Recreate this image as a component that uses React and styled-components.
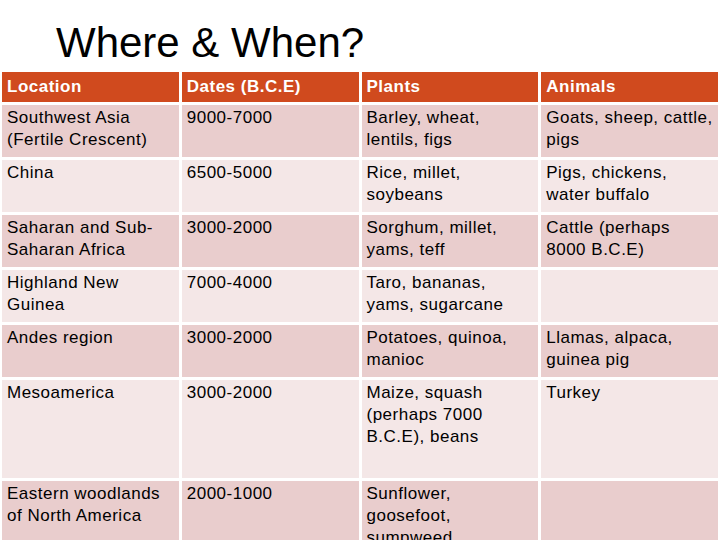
import React from "react";
import styled, { createGlobalStyle } from "styled-components";

const GlobalStyle = createGlobalStyle`
  html, body {
    margin: 0;
    padding: 0;
    background: #ffffff;
    font-family: "Liberation Sans", Arial, sans-serif;
  }
  body {
    width: 720px;
    height: 540px;
    overflow: hidden;
  }
`;

const Slide = styled.div`
  width: 720px;
  height: 540px;
  overflow: hidden;
  display: flex;
  flex-direction: column;
`;

const Title = styled.h1`
  flex-shrink: 0;
  margin: 0;
  height: 72px;
  padding-left: 56px;
  box-sizing: border-box;
  font-size: 42px;
  font-weight: normal;
  line-height: 1;
  padding-top: 22px;
  color: #000000;
  white-space: nowrap;
`;

const Table = styled.div`
  flex-shrink: 0;
  display: grid;
  grid-template-columns: repeat(4, 1fr);
  grid-template-rows: 30px repeat(5, 52px) 98px 80px;
  column-gap: 3px;
  row-gap: 3px;
  padding: 0 2px;
`;

const HeadCell = styled.div`
  background: #d04a1e;
  color: #ffffff;
  font-weight: bold;
  font-size: 17px;
  letter-spacing: 0.5px;
  display: flex;
  align-items: center;
  padding: 0 5px;
`;

const Cell = styled.div`
  background: ${({ $dark }) => ($dark ? "#e9cdcd" : "#f4e7e7")};
  color: #000000;
  font-size: 17px;
  letter-spacing: 0.5px;
  line-height: 22px;
  padding: 2px 5px 0;
  overflow: hidden;
`;

const headers = ["Location", "Dates (B.C.E)", "Plants", "Animals"];

const rows = [
  ["Southwest Asia (Fertile Crescent)", "9000-7000", "Barley, wheat, lentils, figs", "Goats, sheep, cattle, pigs"],
  ["China", "6500-5000", "Rice, millet, soybeans", "Pigs, chickens, water buffalo"],
  ["Saharan and Sub-Saharan Africa", "3000-2000", "Sorghum, millet, yams, teff", "Cattle (perhaps 8000 B.C.E)"],
  ["Highland New Guinea", "7000-4000", "Taro, bananas, yams, sugarcane", ""],
  ["Andes region", "3000-2000", "Potatoes, quinoa, manioc", "Llamas, alpaca, guinea pig"],
  ["Mesoamerica", "3000-2000", "Maize, squash (perhaps 7000 B.C.E), beans", "Turkey"],
  ["Eastern woodlands of North America", "2000-1000", "Sunflower, goosefoot, sumpweed", ""],
];

export default function App() {
  return (
    <Slide>
      <GlobalStyle />
      <Title>Where &amp; When?</Title>
      <Table>
        {headers.map((h) => (
          <HeadCell key={h}>{h}</HeadCell>
        ))}
        {rows.map((row, i) =>
          row.map((text, j) => (
            <Cell key={`${i}-${j}`} $dark={i % 2 === 0}>
              {text}
            </Cell>
          ))
        )}
      </Table>
    </Slide>
  );
}
